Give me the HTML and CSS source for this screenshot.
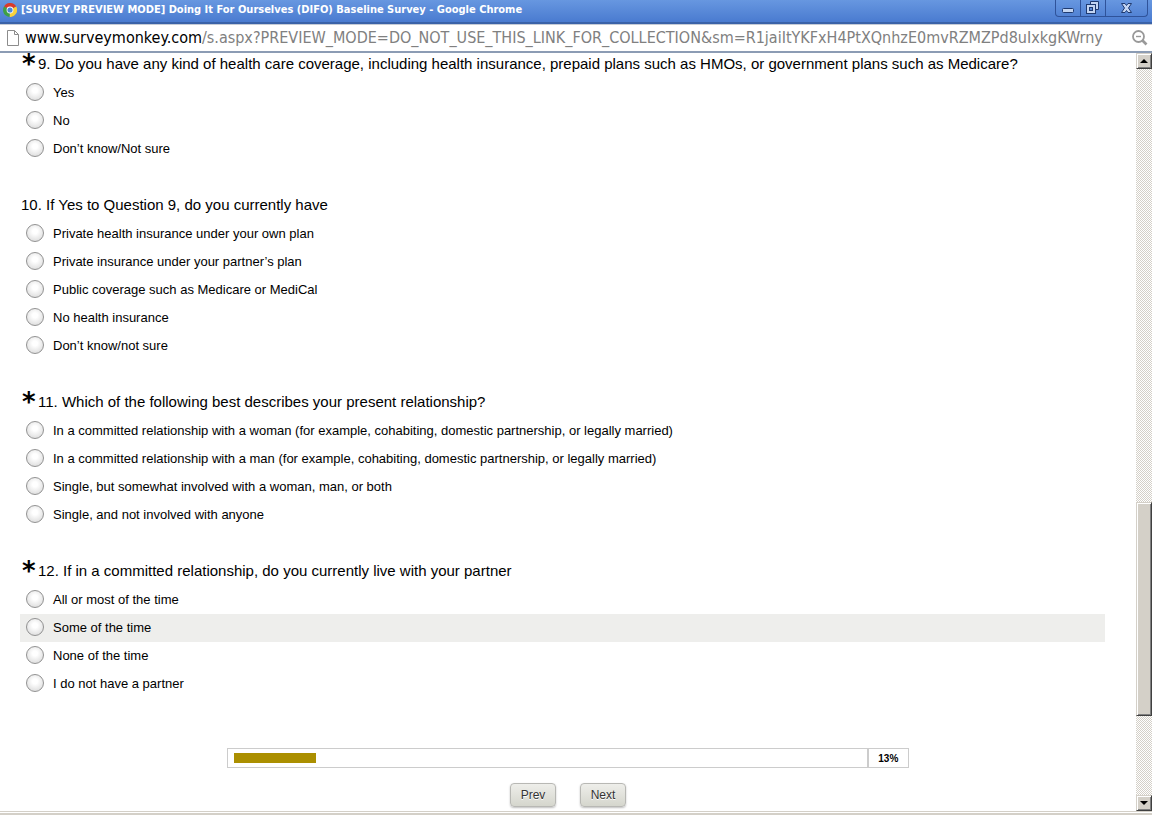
FILE: index.html
```html
<!DOCTYPE html>
<html lang="en">
<head>
  <meta charset="UTF-8">
  <meta name="viewport" content="width=device-width, initial-scale=1.0">
  <title>[SURVEY PREVIEW MODE] Doing It For Ourselves (DIFO) Baseline Survey</title>
  <link rel="stylesheet" href="styles.css">
</head>
<body>
  <header class="titlebar">
    <svg class="app-icon" width="14" height="14" viewBox="0 0 14 14">
      <path d="M7 7 L1 3.5 A7 7 0 0 1 13.2 3.6 Z" fill="#d93a2b"/>
      <path d="M7 7 L13.2 3.6 A7 7 0 0 1 6.5 14 Z" fill="#f7d13c"/>
      <path d="M7 7 L6.5 14 A7 7 0 0 1 1 3.5 Z" fill="#3fa045"/>
      <circle cx="7" cy="7" r="3.4" fill="#fff"/>
      <circle cx="7" cy="7" r="2.6" fill="#4a86d8"/>
    </svg>
    <span class="title">[SURVEY PREVIEW MODE] Doing It For Ourselves (DIFO) Baseline Survey - Google Chrome</span>
    <div class="window-buttons">
      <button type="button" class="win-btn" aria-label="Minimize">
        <svg width="14" height="14" viewBox="0 0 14 14"><rect x="1.5" y="7.5" width="11" height="4" rx="1" fill="#c3d5f2" stroke="#1f3a70"/></svg>
      </button>
      <button type="button" class="win-btn" aria-label="Restore">
        <svg width="14" height="14" viewBox="0 0 14 14">
          <path d="M4.5 0.5 H12.5 V8.5 H9.5 V4 H4.5 Z" fill="#c3d5f2" stroke="#1f3a70"/>
          <rect x="0.5" y="3.5" width="9" height="9" fill="#c3d5f2" stroke="#1f3a70"/>
          <rect x="3.5" y="6.5" width="3" height="3" fill="#5b8bd8" stroke="#1f3a70"/>
        </svg>
      </button>
      <button type="button" class="win-btn close" aria-label="Close">
        <svg width="14" height="14" viewBox="0 0 14 14"><path d="M1.5 2.5 H5 L6.5 4.5 L8 2.5 H11.5 L8.5 7 L11.5 11.5 H8 L6.5 9.5 L5 11.5 H1.5 L4.5 7 Z" fill="#c3d5f2" stroke="#1f3a70"/></svg>
      </button>
    </div>
  </header>

  <div class="address-bar">
    <svg class="page-icon" width="12" height="16" viewBox="0 0 12 16">
      <path d="M0.5 0.5 H7.5 L11.5 4.5 V15.5 H0.5 Z M7.5 0.5 V4.5 H11.5" fill="#fff" stroke="#8c8c8c"/>
    </svg>
    <div class="url"><span class="host">www.surveymonkey.com</span>/s.aspx?PREVIEW_MODE=DO_NOT_USE_THIS_LINK_FOR_COLLECTION&amp;sm=R1jaiItYKFxH4PtXQnhzE0mvRZMZPd8uIxkgKWrny</div>
    <button type="button" class="zoom-btn" aria-label="Zoom out">
      <svg width="16" height="16" viewBox="0 0 16 16" fill="none" stroke="#999">
        <circle cx="6.5" cy="6.5" r="5.5" stroke-width="1.8"/>
        <path d="M4 6.5 H9" stroke-width="1.4"/>
        <path d="M10.5 10.5 L14.5 14.5" stroke-width="2.6"/>
      </svg>
    </button>
  </div>

  <div class="viewport">
    <form class="survey">
      <fieldset class="question required">
        <legend><span class="star">*</span>9. Do you have any kind of health care coverage, including health insurance, prepaid plans such as HMOs, or government plans such as Medicare?</legend>
        <label class="option"><input type="radio" name="q9" value="1">Yes</label>
        <label class="option"><input type="radio" name="q9" value="2">No</label>
        <label class="option"><input type="radio" name="q9" value="3">Don’t know/Not sure</label>
      </fieldset>

      <fieldset class="question">
        <legend>10. If Yes to Question 9, do you currently have</legend>
        <label class="option"><input type="radio" name="q10" value="1">Private health insurance under your own plan</label>
        <label class="option"><input type="radio" name="q10" value="2">Private insurance under your partner’s plan</label>
        <label class="option"><input type="radio" name="q10" value="3">Public coverage such as Medicare or MediCal</label>
        <label class="option"><input type="radio" name="q10" value="4">No health insurance</label>
        <label class="option"><input type="radio" name="q10" value="5">Don’t know/not sure</label>
      </fieldset>

      <fieldset class="question required">
        <legend><span class="star">*</span>11. Which of the following best describes your present relationship?</legend>
        <label class="option"><input type="radio" name="q11" value="1">In a committed relationship with a woman (for example, cohabiting, domestic partnership, or legally married)</label>
        <label class="option"><input type="radio" name="q11" value="2">In a committed relationship with a man (for example, cohabiting, domestic partnership, or legally married)</label>
        <label class="option"><input type="radio" name="q11" value="3">Single, but somewhat involved with a woman, man, or both</label>
        <label class="option"><input type="radio" name="q11" value="4">Single, and not involved with anyone</label>
      </fieldset>

      <fieldset class="question required">
        <legend><span class="star">*</span>12. If in a committed relationship, do you currently live with your partner</legend>
        <label class="option"><input type="radio" name="q12" value="1">All or most of the time</label>
        <label class="option active"><input type="radio" name="q12" value="2">Some of the time</label>
        <label class="option"><input type="radio" name="q12" value="3">None of the time</label>
        <label class="option"><input type="radio" name="q12" value="4">I do not have a partner</label>
      </fieldset>

      <div class="progress">
        <div class="track"><div class="bar" style="width: 13%"></div></div>
        <div class="percent">13%</div>
      </div>

      <div class="nav">
        <button type="button" class="nav-btn">Prev</button>
        <button type="button" class="nav-btn">Next</button>
      </div>
    </form>

    <div class="scrollbar">
      <button type="button" class="scroll-btn" aria-label="Scroll up">
        <svg width="8" height="4" viewBox="0 0 8 4"><path d="M0 4 L4 0 L8 4 Z"/></svg>
      </button>
      <div class="scroll-before"></div>
      <div class="thumb"></div>
      <div class="scroll-after"></div>
      <button type="button" class="scroll-btn" aria-label="Scroll down">
        <svg width="8" height="4" viewBox="0 0 8 4"><path d="M0 0 L4 4 L8 0 Z"/></svg>
      </button>
    </div>
  </div>

  <div class="window-edge"></div>
</body>
</html>
```

FILE: styles.css
```css
* {
  box-sizing: border-box;
}
body {
  font-family: "Liberation Sans", Arial, sans-serif;
  font-size: 13px;
  color: #000;
  background: #fff;
  margin: 0;
  min-height: 100vh;
  display: flex;
  flex-direction: column;
}

/* window frame */
.titlebar {
  display: flex;
  align-items: flex-start;
  height: 24px;
  padding: 0 4px 0 3px;
  background: linear-gradient(#6797e0, #4a7bd0);
  border-bottom: 2px solid #3a62a8;
}
.app-icon {
  margin-top: 3px;
  flex: none;
}
.title {
  flex: 1;
  margin-left: 4px;
  overflow: hidden;
  white-space: nowrap;
  font-family: "DejaVu Sans Condensed", Tahoma, sans-serif;
  font-size: 11px;
  font-weight: bold;
  line-height: 20px;
  color: #fff;
}
.window-buttons {
  display: flex;
  height: 17px;
  border: 1px solid #2f539a;
  border-top: none;
  border-radius: 0 0 4px 4px;
}
.win-btn {
  display: flex;
  align-items: center;
  justify-content: center;
  width: 25px;
  padding: 0;
  border: none;
  border-right: 1px solid #2f539a;
  background: none;
}
.win-btn.close {
  width: 41px;
  border-right: none;
}
.address-bar {
  display: flex;
  align-items: center;
  height: 29px;
  padding: 0 4px 0 7px;
  border-top: 1px solid #c5cbd6;
  border-bottom: 2px solid #8c9cb4;
}
.page-icon {
  flex: none;
}
.url {
  flex: 1;
  min-width: 0;
  margin-left: 6px;
  overflow: hidden;
  white-space: nowrap;
  font-family: "DejaVu Sans Condensed", Tahoma, sans-serif;
  font-size: 16px;
  line-height: 26px;
  color: #808080;
}
.host {
  color: #000;
}
.zoom-btn {
  display: flex;
  padding: 0;
  border: none;
  background: none;
}

/* survey page */
.viewport {
  flex: 1;
  display: flex;
}
.survey {
  flex: 1;
  padding-bottom: 4px;
}
.question {
  margin: 0 31px 31px 20px;
  padding: 0;
  border: none;
}
legend {
  padding: 1px 0 5px 1px;
  font-size: 15px;
  line-height: 20px;
}
.required legend {
  display: flex;
  padding-left: 2px;
}
.star {
  width: 16px;
  height: 20px;
  font-family: "DejaVu Sans", Verdana, sans-serif;
  font-size: 26px;
  font-weight: bold;
  line-height: 20px;
}
.option {
  display: flex;
  align-items: center;
  height: 28px;
  padding: 0 0 2px 6px;
}
.option.active {
  background: #eeeeec;
}
.option input {
  appearance: none;
  width: 18px;
  height: 18px;
  margin: 0 9px 0 0;
  border: 1px solid #929292;
  border-radius: 50%;
  background: radial-gradient(circle at 50% 40%, #fff 20%, #dedede 80%);
}
.option input:checked {
  background: radial-gradient(circle, #444 30%, #eee 35%);
}
.progress {
  display: flex;
  width: 60%;
  height: 20px;
  margin: 50px auto 15px;
  border: 1px solid #ccc;
}
.track {
  flex: 1;
  padding: 4px 6px;
}
.bar {
  height: 10px;
  background: #ab8f00;
}
.percent {
  width: 41px;
  border-left: 2px solid #ccc;
  font-size: 10px;
  font-weight: bold;
  line-height: 19px;
  text-align: center;
}
.nav {
  display: flex;
  justify-content: center;
  gap: 24px;
}
.nav-btn {
  width: 46px;
  height: 24px;
  padding: 0;
  border: 1px solid #b8b8b4;
  border-radius: 4px;
  background: linear-gradient(#eeeeea, #d5d6cd);
  box-shadow: 0 1px 2px rgba(0, 0, 0, 0.25);
  font-family: inherit;
  font-size: 12px;
  color: #333;
  text-shadow: 0 1px 0 #fff;
}

/* scrollbar */
.scrollbar {
  display: flex;
  flex-direction: column;
  width: 16px;
  background: repeating-conic-gradient(#d4d0c8 0 25%, #fff 0 50%) 0 0 / 2px 2px;
}
.scroll-btn,
.thumb {
  border: 1px solid;
  border-color: #d4d0c8 #404040 #404040 #d4d0c8;
  background: #d4d0c8;
  box-shadow: inset 1px 1px 0 #fff, inset -1px -1px 0 #808080;
}
.scroll-btn {
  display: flex;
  align-items: center;
  justify-content: center;
  height: 16px;
  padding: 0;
}
.scroll-before {
  flex: 434;
}
.thumb {
  flex: 213;
}
.scroll-after {
  flex: 79;
}
.window-edge {
  height: 4px;
  border-top: 1px solid #d4d0c8;
  border-bottom: 2px solid #d4d0c8;
}
```
